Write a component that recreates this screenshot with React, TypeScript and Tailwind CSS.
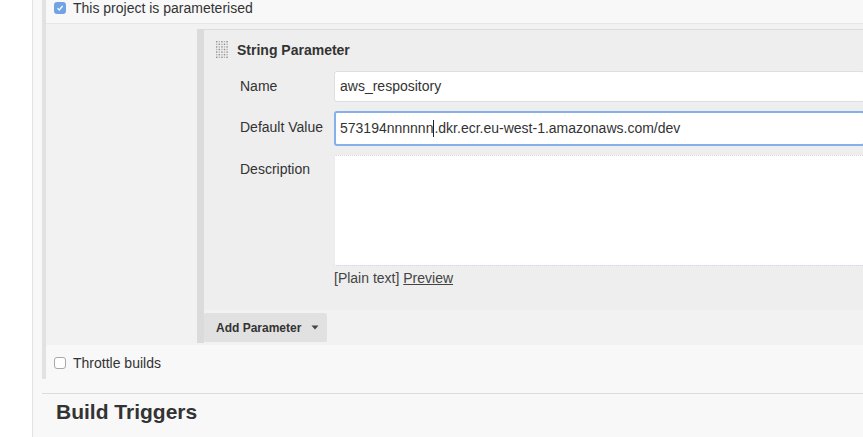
import React from "react";

function DragHandle() {
  const dots: React.ReactNode[] = [];
  for (let r = 0; r < 7; r++) {
    for (let c = 0; c < 5; c++) {
      dots.push(
        <rect key={`${r}-${c}`} x={c * 2.6} y={r * 2.6} width="1.4" height="1.4" fill={(r + c) % 2 ? "#b5b5b5" : "#8f8f8f"} />
      );
    }
  }
  return (
    <svg width="13" height="18" viewBox="0 0 13 18" className="shrink-0">
      {dots}
    </svg>
  );
}

function CheckedBox() {
  return (
    <span className="w-[12px] h-[12px] rounded-[3px] bg-[#72a3e4] flex items-center justify-center shrink-0">
      <svg width="8" height="8" viewBox="0 0 8 8">
        <path d="M1.5 4.2 L3.3 6 L6.6 2" stroke="#fff" strokeWidth="1.2" fill="none" />
      </svg>
    </span>
  );
}

function EmptyBox() {
  return <span className="w-[12px] h-[12px] rounded-[3px] bg-white border border-[#a8a8a8] shrink-0" />;
}

export default function App() {
  return (
    <div className="w-[863px] h-[437px] overflow-hidden bg-white flex font-['Liberation_Sans',Arial,sans-serif] text-[#333]">
      <div className="w-[32px] shrink-0 bg-white" />
      <div className="flex-1 min-w-0 overflow-hidden border-l border-[#e3e3e3] bg-[#f8f8f8]">
        {/* parameterised section */}
        <div className="ml-[9px] border-l-4 border-[#e2e2e2] w-[900px] pb-[9px]">
          <div className="flex items-center h-[15px] pl-[8px] gap-[7px]">
            <CheckedBox />
            <span className="text-[14px] leading-none">This project is parameterised</span>
          </div>

          <div className="mt-[8px] border-t border-[#e6e6e6] bg-[#f2f2f2] pt-[5px] pl-[151px] pb-[2px]">
            <div className="border-l-[7px] border-[#dbdbdb] pb-[1px]">
              <div className="bg-[#eeeeee] border-t border-[#dcdcdc] pb-[24px]">
                <div className="flex items-center gap-[8px] pl-[12px] pt-[11px]">
                  <DragHandle />
                  <span className="text-[14px] font-bold leading-none">String Parameter</span>
                </div>

                <div className="pl-[36px] mt-[12px]">
                  <div className="flex">
                    <div className="w-[94px] pt-[7px] text-[14px] leading-[16px]">Name</div>
                    <div className="w-[531px] h-[31px] bg-white border border-[#dedede] rounded-[3px] flex items-center pl-[5px] text-[14px]">
                      aws_respository
                    </div>
                  </div>

                  <div className="flex mt-[9px]">
                    <div className="w-[94px] pt-[8px] text-[14px] leading-[16px]">Default Value</div>
                    <div className="w-[531px] h-[35px] bg-white border-2 border-[#86b0ea] rounded-[3px] flex items-center pl-[4px] text-[14px]">
                      <span>573194nnnnnn</span>
                      <span className="w-px h-[17px] bg-[#222]" />
                      <span>.dkr.ecr.eu-west-1.amazonaws.com/dev</span>
                    </div>
                  </div>

                  <div className="flex mt-[9px]">
                    <div className="w-[94px] pt-[6px] text-[14px] leading-[16px]">Description</div>
                    <div className="flex flex-col">
                      <div className="w-[531px] h-[111px] bg-white border border-[#d8d8d8] border-b-[#b9c6d8] border-dotted rounded-[2px]" />
                      <div className="mt-[4px] text-[14px] leading-[16px] text-[#444]">
                        [Plain text] <span className="underline">Preview</span>
                      </div>
                    </div>
                  </div>
                </div>
              </div>

              <div className="mt-[3px] w-[123px] h-[29px] bg-[#e1e1e1] rounded-[2px] flex items-center pl-[12px] gap-[10px]">
                <span className="text-[12px] font-bold leading-none text-[#333]">Add Parameter</span>
                <svg width="8" height="5" viewBox="0 0 8 5">
                  <path d="M0.5 0.5 L7.5 0.5 L4 4.5 Z" fill="#444" />
                </svg>
              </div>
            </div>
          </div>

          <div className="flex items-center h-[14px] pl-[8px] gap-[7px] mt-[11px]">
            <EmptyBox />
            <span className="text-[14px] leading-none">Throttle builds</span>
          </div>
        </div>

        <div className="ml-[9px] mt-[14px] border-t border-[#dcdcdc] w-[900px] pl-[14px] pt-[6px]">
          <h2 className="text-[21px] font-bold leading-[24px] text-[#333]">Build Triggers</h2>
        </div>
      </div>
    </div>
  );
}
